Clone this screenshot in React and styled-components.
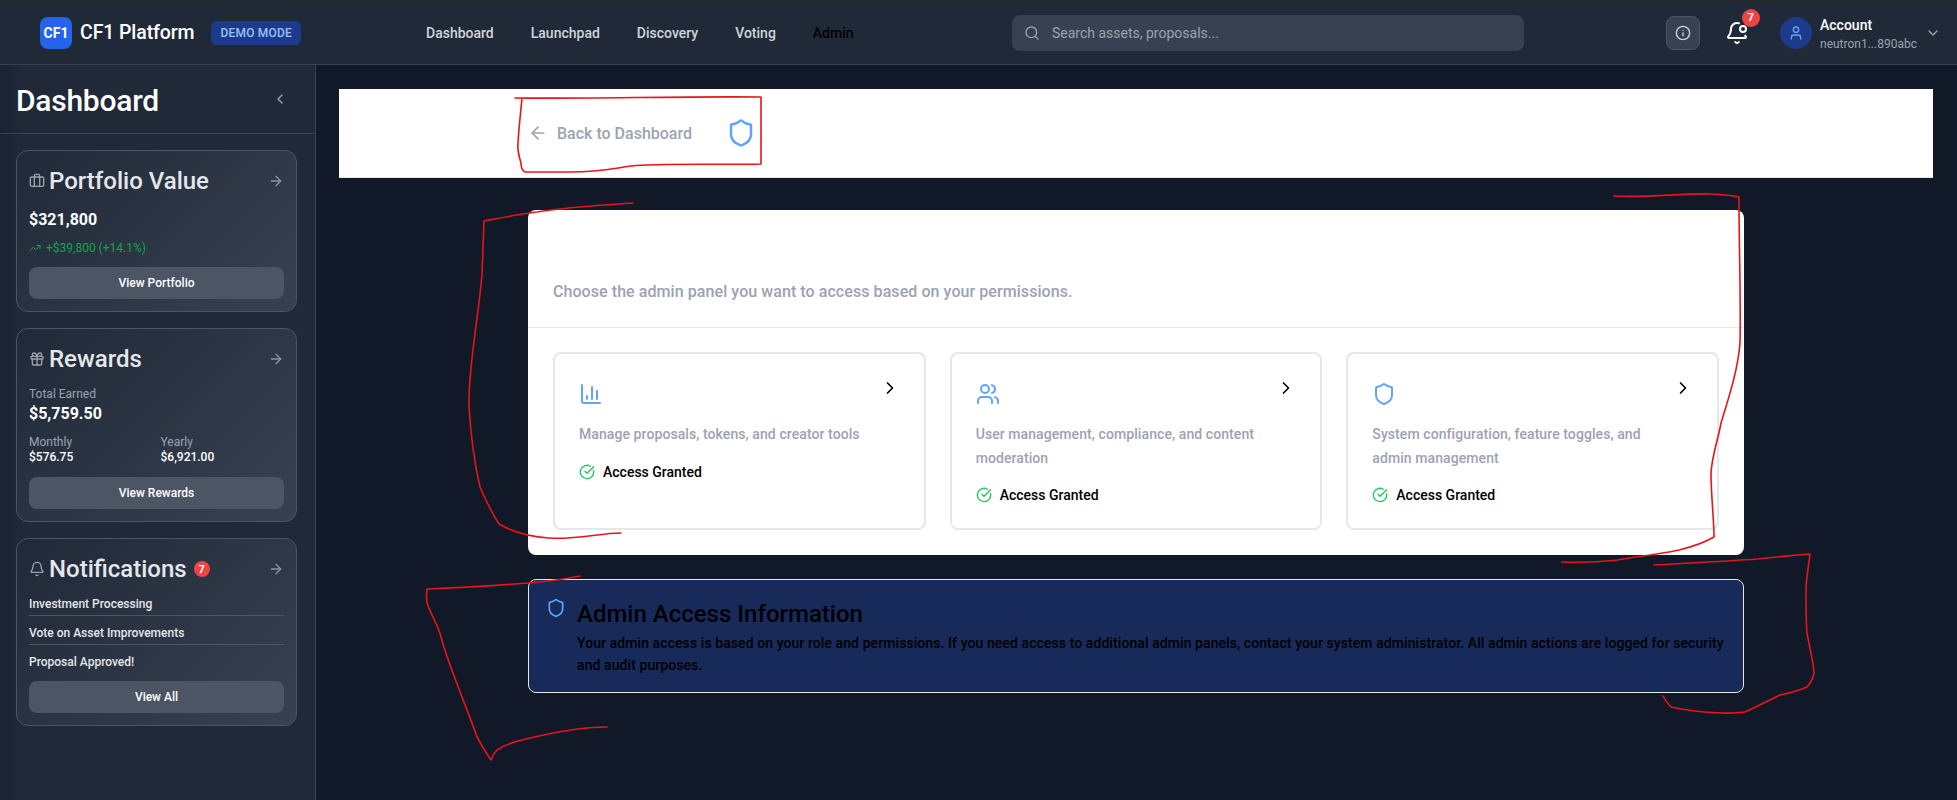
import React from 'react';
import styled, { createGlobalStyle } from 'styled-components';
import {
  ArrowLeft, ArrowRight, BarChart3, Bell, BellDot, Briefcase, CheckCircle, ChevronDown, ChevronLeft,
  ChevronRight, Gift, Info, Search, Shield, TrendingUp, User, Users,
} from 'lucide-react';

const GlobalStyle = createGlobalStyle`
  html, body {
    margin: 0;
    padding: 0;
    height: 100%;
    overflow: hidden;
    background: #111827;
    font-family: Roboto, "Liberation Sans", sans-serif;
  }
  * { box-sizing: border-box; }
`;

const Page = styled.div`
  position: relative;
  height: 100vh;
  display: flex;
  flex-direction: column;
  overflow: hidden;
`;

/* Top bar */
const Header = styled.header`
  height: 65px;
  flex: none;
  display: flex;
  align-items: center;
  padding: 0 16px 0 40px;
  background: #1f2937;
  border-top: 1px solid #2a2a2a;
  border-bottom: 1px solid #374151;
`;

const Brand = styled.div`
  width: 386px;
  flex: none;
  display: flex;
  align-items: center;
`;

const LogoMark = styled.div`
  width: 32px;
  height: 32px;
  border-radius: 8px;
  background: #2563eb;
  color: #fff;
  font-size: 14px;
  font-weight: 700;
  display: flex;
  align-items: center;
  justify-content: center;
`;

const BrandName = styled.span`
  margin-left: 8px;
  font-size: 19.5px;
  letter-spacing: -0.1px;
  font-weight: 500;
  color: #fff;
`;

const DemoBadge = styled.span`
  margin-left: 17px;
  padding: 0 9px;
  height: 24px;
  display: flex;
  align-items: center;
  border-radius: 6px;
  background: #1e3a8a;
  color: #93c5fd;
  font-size: 12px;
  letter-spacing: 0.2px;
  font-weight: 500;
`;

const Nav = styled.nav`
  width: 586px;
  flex: none;
  display: flex;
  gap: 37px;
`;

const NavLink = styled.a`
  font-size: 14px;
  font-weight: 500;
  color: ${(p) => (p.$dark ? '#000' : '#d1d5db')};
`;

const SearchBox = styled.div`
  width: 512px;
  height: 36px;
  flex: none;
  display: flex;
  align-items: center;
  gap: 12px;
  padding-left: 12px;
  border-radius: 8px;
  background: #374151;
  color: #9ca3af;
  font-size: 14px;
`;

const InfoButton = styled.button`
  width: 34px;
  height: 34px;
  margin-left: 142px;
  padding: 0;
  display: flex;
  align-items: center;
  justify-content: center;
  background: #374151;
  border: 1px solid #4b5563;
  border-radius: 8px;
  color: #d1d5db;
`;

const BellWrap = styled.div`
  position: relative;
  margin-left: 25px;
  width: 24px;
  height: 24px;
  color: #fff;
`;

const BellCount = styled.span`
  position: absolute;
  top: -12px;
  right: -11px;
  width: 18px;
  height: 18px;
  border-radius: 50%;
  background: #ef4444;
  color: #fff;
  font-size: 11px;
  font-weight: 700;
  display: flex;
  align-items: center;
  justify-content: center;
`;

const Avatar = styled.div`
  width: 32px;
  height: 32px;
  margin-left: 31px;
  border-radius: 50%;
  background: #1e3a8a;
  color: #60a5fa;
  display: flex;
  align-items: center;
  justify-content: center;
`;

const AccountText = styled.div`
  margin: 4px 0 0 8px;
  display: flex;
  flex-direction: column;
  gap: 3px;
  width: 105px;
`;

const AccountName = styled.span`
  font-size: 14px;
  font-weight: 500;
  line-height: 17px;
  color: #fff;
`;

const AccountAddr = styled.span`
  font-size: 12px;
  line-height: 15px;
  color: #9ca3af;
`;

/* Below the top bar */
const Body = styled.div`
  flex: 1;
  min-height: 0;
  display: flex;
`;

const Sidebar = styled.aside`
  width: 316px;
  flex: none;
  background: linear-gradient(90deg, #1a2331 0, #1f2937 22px);
  border-right: 1px solid #374151;
`;

const SidebarHead = styled.div`
  height: 69px;
  display: flex;
  align-items: center;
  justify-content: space-between;
  padding: 0 27px 0 16px;
  border-bottom: 1px solid #374151;
  color: #9ca3af;
`;

const SidebarTitle = styled.h2`
  margin: 2px 0 0;
  font-size: 30px;
  letter-spacing: -0.25px;
  font-weight: 500;
  color: #fff;
`;

const SidebarCards = styled.div`
  display: flex;
  flex-direction: column;
  gap: 16px;
  padding: 16px 18px 0 16px;
`;

const SideCard = styled.section`
  padding: 14px 12px 12px;
  border: 1px solid #4b5563;
  border-radius: 12px;
  background: linear-gradient(135deg, #1f2937, #374151);
`;

const SideCardHead = styled.div`
  display: flex;
  align-items: center;
  height: 32px;
  color: #9ca3af;
`;

const SideCardTitle = styled.h3`
  margin: 0 0 0 4px;
  font-size: 24px;
  font-weight: 500;
  color: #e5e7eb;
`;

const HeadArrow = styled.span`
  margin-left: auto;
  display: flex;
  color: #8b93a1;
`;

const CountDot = styled.span`
  width: 16px;
  height: 16px;
  margin-left: 7px;
  border-radius: 50%;
  background: #ef4444;
  color: #fff;
  font-size: 11px;
  font-weight: 700;
  display: flex;
  align-items: center;
  justify-content: center;
`;

const BigValue = styled.div`
  margin-top: ${(p) => p.$top || 0}px;
  font-size: 16px;
  line-height: 24px;
  font-weight: 700;
  color: #fff;
`;

const Gain = styled.div`
  margin-top: 8px;
  display: flex;
  align-items: center;
  gap: 5px;
  font-size: 12px;
  line-height: 16px;
  color: #16a34a;
`;

const Muted = styled.div`
  margin-top: ${(p) => p.$top || 0}px;
  font-size: 12px;
  line-height: 16px;
  color: #9ca3af;
`;

const Split = styled.div`
  margin: 8px 0 1px;
  display: grid;
  grid-template-columns: 1fr 1fr;
  gap: 8px;
`;

const SmallValue = styled.div`
  font-size: 12px;
  line-height: 15px;
  font-weight: 500;
  color: #fff;
`;

const ViewButton = styled.button`
  width: 100%;
  height: 32px;
  margin-top: 11px;
  border: 0;
  border-radius: 8px;
  background: #4b5563;
  color: #fff;
  font-family: inherit;
  font-size: 12px;
  font-weight: 500;
`;

const NoteList = styled.div`
  margin-top: 2px;
`;

const NoteItem = styled.div`
  padding: 9px 0 3px;
  font-size: 12px;
  line-height: 16px;
  font-weight: 500;
  color: #e5e7eb;
  border-bottom: 1px solid #4b5563;
  &:last-child { border-bottom: 0; padding-bottom: 0; }
`;

/* Main column */
const Main = styled.main`
  flex: 1;
  min-width: 0;
  padding: 24px 24px 0 23px;
  background: #111827;
`;

const TopStrip = styled.div`
  height: 89px;
  background: #fff;
  border-bottom: 1px solid #e5e7eb;
`;

const Container = styled.div`
  width: 1216px;
  margin: 0 auto;
`;

const StripRow = styled(Container)`
  height: 88px;
  display: flex;
  align-items: center;
`;

const BackLink = styled.a`
  display: flex;
  align-items: center;
  gap: 9px;
  color: #9ca3af;
  font-size: 16px;
  font-weight: 500;
`;

const ShieldMark = styled.span`
  display: flex;
  margin-left: 34px;
  color: #60a5fa;
`;

const Panel = styled.section`
  margin-top: 32px;
  background: #fff;
  border-radius: 8px;
  height: 345px;
`;

const PanelHead = styled.div`
  height: 118px;
  padding: 70px 25px 0;
  border-bottom: 1px solid #e5e7eb;
  color: #9ca3af;
  font-size: 16px;
  letter-spacing: 0.07px;
  line-height: 24px;
  font-weight: 500;
`;

const PanelCards = styled.div`
  display: grid;
  grid-template-columns: repeat(3, 1fr);
  gap: 24px;
  padding: 24px 25px 0;
`;

const AccessCard = styled.div`
  height: 178px;
  padding: 24px;
  border: 2px solid #e5e7eb;
  border-radius: 8px;
`;

const AccessTop = styled.div`
  display: flex;
  justify-content: space-between;
  align-items: flex-start;
  height: 32px;
  color: #60a5fa;
`;

const AccessIcon = styled.span`
  display: flex;
  margin-top: 4px;
`;

const AccessChevron = styled.span`
  display: flex;
  color: #000;
`;

const AccessDesc = styled.p`
  margin: 13px 0 0;
  max-width: 300px;
  color: #9ca3af;
  font-size: 14px;
  letter-spacing: 0.08px;
  line-height: 23.5px;
  font-weight: 500;
`;

const Granted = styled.div`
  margin-top: 13px;
  display: flex;
  align-items: center;
  gap: 8px;
  color: #000;
  font-size: 14px;
  line-height: 24px;
  font-weight: 500;
`;

const InfoBox = styled.section`
  margin-top: 24px;
  height: 114px;
  padding: 18px 16px 0 17px;
  display: flex;
  gap: 11px;
  background: #172a5a;
  border: 1px solid #e5e7eb;
  border-radius: 8px;
  color: #60a5fa;
`;

const InfoTitle = styled.h3`
  margin: 0;
  font-size: 24px;
  line-height: 32px;
  font-weight: 500;
  color: #000;
`;

const InfoCopy = styled.p`
  margin: 2px 0 0;
  font-size: 14px;
  letter-spacing: 0.08px;
  line-height: 22px;
  font-weight: 500;
  color: #000;
`;

/* Red pen marks drawn over the screenshot */
const Scribbles = styled.svg`
  position: absolute;
  top: 0;
  left: 0;
  pointer-events: none;
  fill: none;
  stroke: #e8141a;
  stroke-width: 1.6;
  stroke-linecap: round;
  stroke-linejoin: round;
`;

const penMarks = [
  'M515 98 C580 99 690 96 761 97 L761 164 C720 165 660 163 631 166 C610 169 600 172 570 172 L525 172 Q521 170 521 163 Q517 150 518 143 C519 125 521 110 522 98',
  'M633 203 C590 206 560 208 537 212 C520 214 500 218 484 221 Q483 250 482 275 C478 320 468 370 469 406 C471 440 476 470 480 487 Q490 510 499 524 Q520 536 549 538 C575 540 600 533 621 533',
  'M1614 196 C1650 198 1680 193 1711 194 Q1730 195 1739 197 C1739 250 1741 300 1740 343 C1738 370 1728 400 1721 423 C1718 440 1712 455 1711 473 C1711 495 1714 520 1714 537 Q1700 545 1679 550 C1650 556 1630 557 1618 560 Q1590 563 1562 562',
  'M1654 565 C1690 563 1730 561 1758 559 Q1785 556 1810 554 C1808 570 1806 580 1806 590 C1806 610 1806 625 1807 633 C1810 650 1814 665 1814 673 Q1812 682 1807 687 Q1795 692 1780 695 Q1760 705 1745 712 C1730 714 1715 713 1704 712 Q1685 710 1671 707 Q1666 702 1663 696',
  'M580 576 Q555 581 528 583 C490 586 455 588 427 589 Q426 596 427 603 C431 615 438 625 441 637 C450 670 468 710 477 737 Q484 750 491 760 Q493 754 497 750 Q508 743 522 740 C550 733 580 727 607 727',
];

function SummaryCard({ icon: Icon, title, count, children }) {
  return (
    <SideCard>
      <SideCardHead>
        <Icon size={16} />
        <SideCardTitle>{title}</SideCardTitle>
        {count && <CountDot>{count}</CountDot>}
        <HeadArrow><ArrowRight size={16} /></HeadArrow>
      </SideCardHead>
      {children}
    </SideCard>
  );
}

function PanelCard({ icon: Icon, text }) {
  return (
    <AccessCard>
      <AccessTop>
        <AccessIcon><Icon size={24} /></AccessIcon>
        <AccessChevron><ChevronRight size={20} /></AccessChevron>
      </AccessTop>
      <AccessDesc>{text}</AccessDesc>
      <Granted>
        <CheckCircle size={16} color="#22c55e" />
        Access Granted
      </Granted>
    </AccessCard>
  );
}

export default function App() {
  return (
    <Page>
      <GlobalStyle />
      <Header>
        <Brand>
          <LogoMark>CF1</LogoMark>
          <BrandName>CF1 Platform</BrandName>
          <DemoBadge>DEMO MODE</DemoBadge>
        </Brand>
        <Nav>
          <NavLink>Dashboard</NavLink>
          <NavLink>Launchpad</NavLink>
          <NavLink>Discovery</NavLink>
          <NavLink>Voting</NavLink>
          <NavLink $dark>Admin</NavLink>
        </Nav>
        <SearchBox>
          <Search size={16} />
          Search assets, proposals...
        </SearchBox>
        <InfoButton><Info size={16} /></InfoButton>
        <BellWrap>
          <BellDot size={24} />
          <BellCount>7</BellCount>
        </BellWrap>
        <Avatar><User size={16} /></Avatar>
        <AccountText>
          <AccountName>Account</AccountName>
          <AccountAddr>neutron1...890abc</AccountAddr>
        </AccountText>
        <ChevronDown size={16} color="#9ca3af" />
      </Header>

      <Body>
        <Sidebar>
          <SidebarHead>
            <SidebarTitle>Dashboard</SidebarTitle>
            <ChevronLeft size={16} />
          </SidebarHead>
          <SidebarCards>
            <SummaryCard icon={Briefcase} title="Portfolio Value">
              <BigValue $top={11}>$321,800</BigValue>
              <Gain><TrendingUp size={12} /> +$39,800 (+14.1%)</Gain>
              <ViewButton>View Portfolio</ViewButton>
            </SummaryCard>
            <SummaryCard icon={Gift} title="Rewards">
              <Muted $top={11}>Total Earned</Muted>
              <BigValue>$5,759.50</BigValue>
              <Split>
                <div>
                  <Muted>Monthly</Muted>
                  <SmallValue>$576.75</SmallValue>
                </div>
                <div>
                  <Muted>Yearly</Muted>
                  <SmallValue>$6,921.00</SmallValue>
                </div>
              </Split>
              <ViewButton>View Rewards</ViewButton>
            </SummaryCard>
            <SummaryCard icon={Bell} title="Notifications" count="7">
              <NoteList>
                <NoteItem>Investment Processing</NoteItem>
                <NoteItem>Vote on Asset Improvements</NoteItem>
                <NoteItem>Proposal Approved!</NoteItem>
              </NoteList>
              <ViewButton>View All</ViewButton>
            </SummaryCard>
          </SidebarCards>
        </Sidebar>

        <Main>
          <TopStrip>
            <StripRow>
              <BackLink>
                <ArrowLeft size={20} />
                Back to Dashboard
              </BackLink>
              <ShieldMark><Shield size={30} /></ShieldMark>
            </StripRow>
          </TopStrip>
          <Container>
            <Panel>
              <PanelHead>Choose the admin panel you want to access based on your permissions.</PanelHead>
              <PanelCards>
                <PanelCard icon={BarChart3} text="Manage proposals, tokens, and creator tools" />
                <PanelCard icon={Users} text="User management, compliance, and content moderation" />
                <PanelCard icon={Shield} text="System configuration, feature toggles, and admin management" />
              </PanelCards>
            </Panel>
            <InfoBox>
              <Shield size={20} style={{ flex: 'none' }} />
              <div>
                <InfoTitle>Admin Access Information</InfoTitle>
                <InfoCopy>
                  Your admin access is based on your role and permissions. If you need access to additional admin panels, contact your system administrator. All admin actions are logged for security and audit purposes.
                </InfoCopy>
              </div>
            </InfoBox>
          </Container>
        </Main>
      </Body>

      <Scribbles width="1957" height="800" viewBox="0 0 1957 800">
        {penMarks.map((d) => <path key={d} d={d} />)}
      </Scribbles>
    </Page>
  );
}
